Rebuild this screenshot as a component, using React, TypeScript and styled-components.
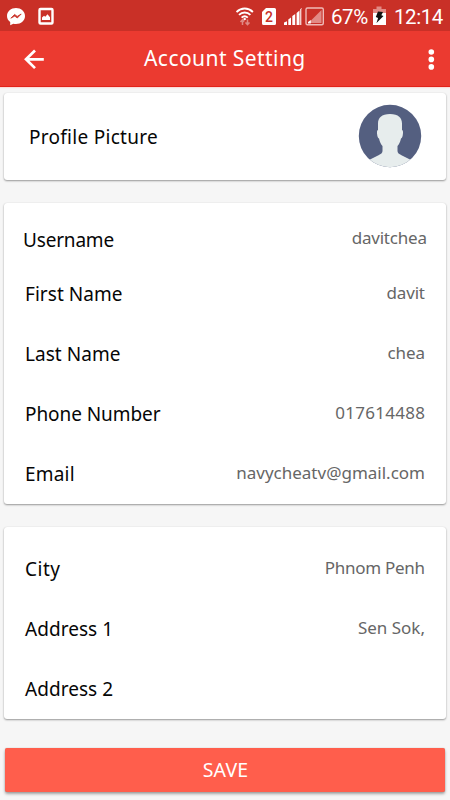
import React from "react";
import styled, { createGlobalStyle } from "styled-components";

const Global = createGlobalStyle`
  *, *::before, *::after { box-sizing: border-box; }
  body {
    margin: 0;
    background: #f6f6f6;
    font-family: "Noto Sans", "Open Sans", sans-serif;
    overflow: hidden;
  }
`;

const Screen = styled.div`
  width: 450px;
  height: 800px;
  background: #f6f6f6;
  display: flex;
  flex-direction: column;
  overflow: hidden;
`;

const StatusBar = styled.div`
  flex: none;
  height: 31px;
  background: #c93027;
  color: #fff;
  display: flex;
  justify-content: space-between;
  padding-left: 7px;
`;

const Group = styled.div`
  display: flex;
`;

const StatusText = styled.span<{ $w: number }>`
  width: ${(p) => p.$w}px;
  font: 400 20.5px/34px Roboto, sans-serif;
  letter-spacing: -0.45px;
  white-space: nowrap;
`;

const Header = styled.header`
  flex: none;
  height: 56px;
  background: #eb3a30;
  border-bottom: 1px solid #e2231a;
  box-shadow: 0 1px 1px #fbdcda;
  display: grid;
  grid-template-columns: 67px 1fr 36px;
  align-items: center;
`;

const Title = styled.h1`
  margin: 0;
  padding: 0 0 2px 77px;
  color: #fff;
  font-size: 21px;
  font-weight: 400;
  line-height: 28px;
  letter-spacing: 0.44px;
  white-space: nowrap;
`;

const IconButton = styled.button`
  border: 0;
  padding: 0;
  background: none;
  display: flex;
  width: 100%;
`;

const Content = styled.main`
  display: flex;
  flex-direction: column;
  padding: 6px 4px 0;
`;

const Card = styled.section<{ $h: number; $gap: number; $top: number }>`
  height: ${(p) => p.$h}px;
  margin-bottom: ${(p) => p.$gap}px;
  padding-top: ${(p) => p.$top}px;
  background: #fff;
  border-radius: 3px;
  box-shadow: 0 1px 2px rgba(0, 0, 0, 0.38), 0 0 1px rgba(0, 0, 0, 0.12);
`;

const Row = styled.div<{ $h: number; $l: number; $r: number }>`
  height: ${(p) => p.$h}px;
  padding: 0 ${(p) => p.$r}px 0 ${(p) => p.$l}px;
  display: flex;
  justify-content: space-between;
  align-items: center;
`;

const Label = styled.span<{ $ls: number; $drop?: number }>`
  color: #060606;
  font-size: 19px;
  line-height: 26px;
  padding-top: ${(p) => p.$drop ?? 0}px;
  letter-spacing: ${(p) => p.$ls}px;
  white-space: nowrap;
`;

const Value = styled.span<{ $ls: number; $lift?: number }>`
  color: #666;
  font-size: 17px;
  line-height: 24px;
  padding-bottom: ${(p) => p.$lift ?? 2}px;
  letter-spacing: ${(p) => p.$ls}px;
  margin-right: ${(p) => -p.$ls}px;
  white-space: nowrap;
`;

const SaveButton = styled.button`
  height: 44px;
  margin: 0 1px;
  padding: 0 0 0 1px;
  border: 0;
  border-radius: 2px;
  background: #ff5e4c;
  box-shadow: 0 2px 3px rgba(0, 0, 0, 0.34), 0 0 1px rgba(0, 0, 0, 0.3);
  color: #fff;
  font: 400 19.5px/44px "Noto Sans", sans-serif;
  letter-spacing: 0.2px;
`;

type Field = { label: string; value: string; ls?: number; vs?: number };

const personal: Field[] = [
  { label: "First Name", value: "davit", ls: 0.05, vs: -0.15 },
  { label: "Last Name", value: "chea", ls: 0.05, vs: -0.1 },
  { label: "Phone Number", value: "017614488", ls: -0.07, vs: 0.27 },
  { label: "Email", value: "navycheatv@gmail.com", ls: 0.2 },
];

const address: Field[] = [
  { label: "City", value: "Phnom Penh", ls: 0.5, vs: -0.28 },
  { label: "Address 1", value: "Sen Sok,", ls: 0.05 },
  { label: "Address 2", value: "", ls: 0.05 },
];

const Fields = ({ items }: { items: Field[] }) => (
  <>
    {items.map((f) => (
      <Row key={f.label} $h={60} $l={21} $r={21}>
        <Label $ls={f.ls ?? 0}>{f.label}</Label>
        <Value $ls={f.vs ?? 0}>{f.value}</Value>
      </Row>
    ))}
  </>
);

const NotificationIcons = () => (
  <svg width="50" height="31" viewBox="7 0 50 31">
    <path d="M16 8c-5 0-9 3.500-9 8 0 2.600 1.200 4.600 3.200 6v3.200l3.200-1.500c.8.200 1.700.3 2.600.3 5 0 9-3.500 9-8s-4-8-9-8z" fill="#fff" />
    <path d="M10.800 18.200l3.800-3.800 2.600 2 4-2.400-3.900 4-2.500-1.900z" fill="#c93027" stroke="#c93027" strokeWidth=".8" />
    <rect x="39.500" y="9" width="13" height="14.500" rx="1" fill="none" stroke="#fff" strokeWidth="2.400" />
    <path d="M42 20v-2.600l2-1.700 1.300 1 2.200-2.400 2.500 3V20z" fill="#fff" />
  </svg>
);

const SignalIcons = () => (
  <svg width="95" height="31" viewBox="236 0 95 31">
    <g fill="none" stroke="#fff" strokeWidth="1.900">
      <path d="M236.500 12c4.800-4.600 11.600-4.600 16.400 0" />
      <path d="M239 14.900c3.300-3.200 8.100-3.200 11.400 0" />
      <path d="M241.600 17.600c1.900-1.800 4.300-1.800 6.200 0" />
    </g>
    <path d="M243 19l1.700-1.200 1.700 1.200-1.700 1.500z" fill="#fff" />
    <path d="M242.500 25v-5m-2 2l2-2.300 1.500 2M247.500 19.500v5m-2-2l2 2.200 2-2.200" fill="none" stroke="#df8984" strokeWidth="1.500" />
    <path d="M266 8h8.500a1.500 1.500 0 0 1 1.500 1.500v14a1.500 1.500 0 0 1-1.500 1.500h-11a1.500 1.500 0 0 1-1.500-1.500V12z" fill="#fff" />
    <text x="269" y="21.700" textAnchor="middle" fontFamily="Roboto" fontWeight="500" fontSize="14" fill="#c93027">2</text>
    <path d="M284 25v-2.500l3-1.300V25zM288.300 25v-5.500l2.700-2V25zM292.300 25v-9l2.900-2V25zM296.600 25V13l2.900-2.500V25zM300.800 25V9.500l.8-1.500H301v17z" fill="#fff" />
    <path d="M300.300 9.500l1-1.500v17h-1z" fill="#fff" />
    <rect x="306" y="8" width="17.300" height="16.700" rx="1.500" fill="none" stroke="#efbab7" strokeWidth="1.400" />
    <path d="M308.500 23L321.500 10v13z" fill="#e28a85" />
    <path d="M308 23.500v-1.500l2.800-2v3.500z" fill="#fff" />
  </svg>
);

const BatteryIcon = () => (
  <svg width="23" height="31" viewBox="371 0 23 31">
    <path d="M376.500 6.500h5V9h4.500v4.500h-13V9h3.500z" fill="#e28a85" />
    <path d="M373 13h13v12h-13z" fill="#fff" />
    <path d="M378 11.500l5 .5-1.700 3.300 2.200.8-7 7 1.600-5-2.300-1z" fill="#111" />
  </svg>
);

const BackArrow = () => (
  <svg width="67" height="55" viewBox="0 31 67 55" fill="none" stroke="#fff" strokeWidth="2.700">
    <path d="M43.800 59.300H26M35 50.500l-9 8.800 9 8.800" />
  </svg>
);

const MoreIcon = () => (
  <svg width="36" height="55" viewBox="414 31 36 55" fill="#fff">
    <circle cx="431.300" cy="52" r="2.800" />
    <circle cx="431.300" cy="59.400" r="2.800" />
    <circle cx="431.300" cy="66.900" r="2.800" />
  </svg>
);

const Avatar = () => (
  <svg width="64" height="64" viewBox="358 104 64 64">
    <defs>
      <clipPath id="avatar-circle">
        <circle cx="390" cy="136" r="31.200" />
      </clipPath>
    </defs>
    <g clipPath="url(#avatar-circle)">
      <path d="M358 104h64v64h-64z" fill="#545f80" />
      <path d="M390 114c-8.500 0-12 4-12 9.500v6.500c-1 .3-1.200 2-.9 4 .2 2.500.8 4.200 1.900 4.500.8 3.500 2 6 3.500 7.500v5c0 2-1.500 3-4 4.300L365 162v9h50v-9l-13.500-6.700c-2.500-1.300-4-2.300-4-4.300v-5c1.500-1.500 2.700-4 3.500-7.500 1.100-.3 1.700-2 1.900-4.500.3-2 .1-3.700-.9-4v-6.500c0-5.500-3.500-9.500-12-9.500z" fill="#e7eded" />
    </g>
  </svg>
);

export default function App() {
  return (
    <>
      <Global />
      <Screen>
        <StatusBar>
          <Group>
            <NotificationIcons />
          </Group>
          <Group>
            <SignalIcons />
            <StatusText $w={40}>67%</StatusText>
            <BatteryIcon />
            <StatusText $w={56}>12:14</StatusText>
          </Group>
        </StatusBar>
        <Header>
          <IconButton aria-label="Back"><BackArrow /></IconButton>
          <Title>Account Setting</Title>
          <IconButton aria-label="More options"><MoreIcon /></IconButton>
        </Header>
        <Content>
          <Card $h={87} $gap={23} $top={0}>
            <Row $h={86} $l={25} $r={24}>
              <Label $ls={0.28} $drop={2}>Profile Picture</Label>
              <Avatar />
            </Row>
          </Card>
          <Card $h={300.5} $gap={23} $top={13}>
            <Row $h={48} $l={19} $r={19}>
              <Label $ls={-0.18}>Username</Label>
              <Value $ls={-0.2} $lift={4}>davitchea</Value>
            </Row>
            <Fields items={personal} />
          </Card>
          <Card $h={192} $gap={29.5} $top={12.5}>
            <Fields items={address} />
          </Card>
          <SaveButton>SAVE</SaveButton>
        </Content>
      </Screen>
    </>
  );
}
